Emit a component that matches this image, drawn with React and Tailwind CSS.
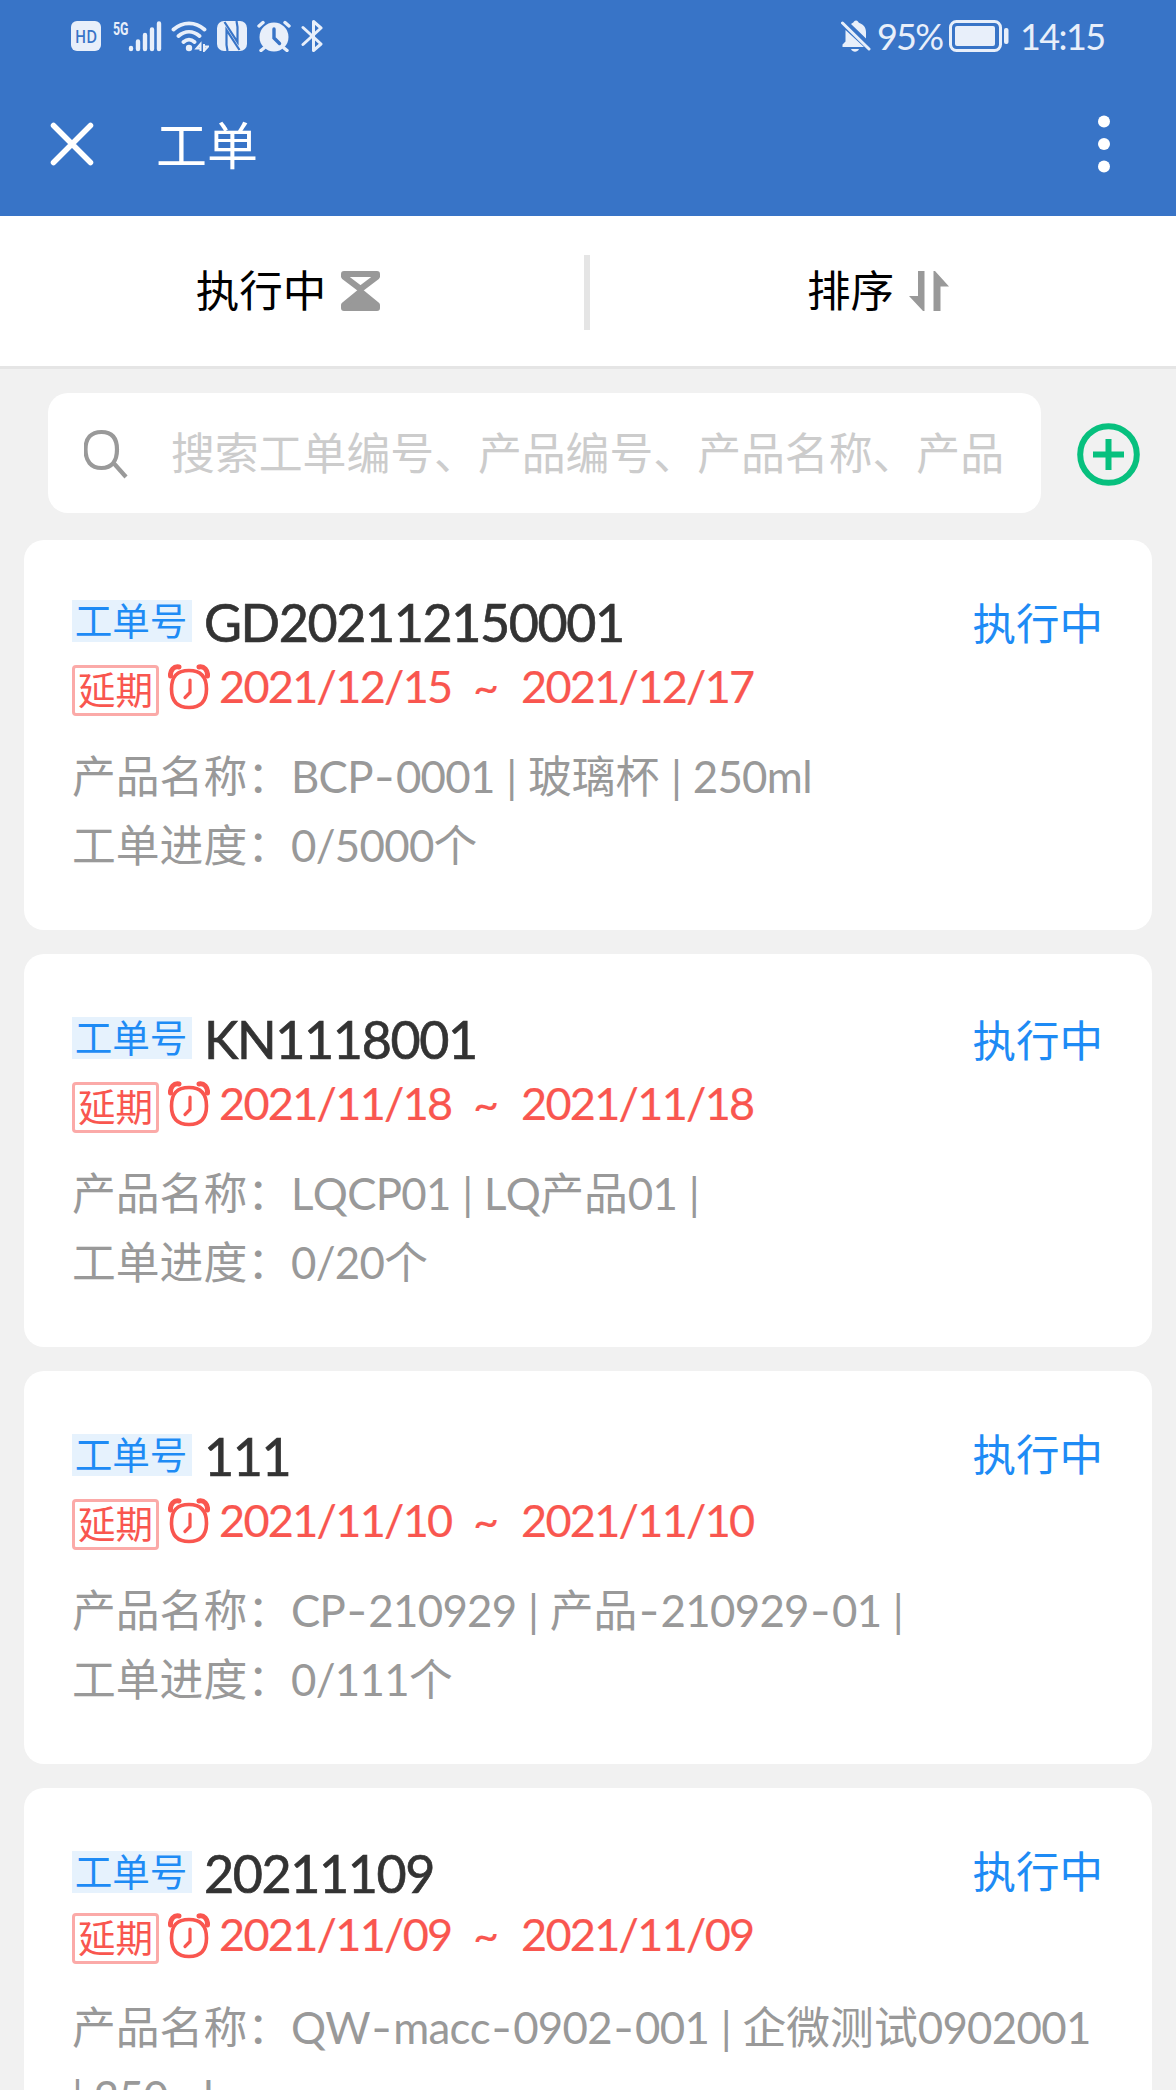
import React from 'react';
import clsx from 'clsx';

const ORDERS = [
  {
    code: 'GD202112150001',
    status: '执行中',
    start: '2021/12/15',
    end: '2021/12/17',
    product: 'BCP-0001 | 玻璃杯 | 250ml',
    progress: '0/5000个',
  },
  {
    code: 'KN1118001',
    status: '执行中',
    start: '2021/11/18',
    end: '2021/11/18',
    product: 'LQCP01 | LQ产品01 |',
    progress: '0/20个',
  },
  {
    code: '111',
    status: '执行中',
    start: '2021/11/10',
    end: '2021/11/10',
    product: 'CP-210929 | 产品-210929-01 |',
    progress: '0/111个',
  },
  {
    code: '20211109',
    status: '执行中',
    start: '2021/11/09',
    end: '2021/11/09',
    product: 'QW-macc-0902-001 | 企微测试0902001 | 250ml',
  },
];

// Latin runs use their own face next to the Chinese text, hyphens get a wider one
const Mixed = ({ text }) =>
  text.split(/([\u4e00-\u9fff：]+|-)/).filter(Boolean).map((part, i) => {
    if (part === '-') {
      return (
        <span key={i} className="mx-[1.5px] font-['Inter',sans-serif] leading-none">
          -
        </span>
      );
    }
    if (/[\u4e00-\u9fff：]/.test(part)) {
      return <span key={i}>{part}</span>;
    }
    return (
      <span key={i} className="font-['Lato',sans-serif] leading-none tracking-[-0.7px] [font-kerning:none] [word-spacing:1px]">
        {part}
      </span>
    );
  });

const StatusBar = () => (
  <div className="flex h-[72px] items-center pl-[71px] pr-[72px] text-[#e8effa]">
    <svg width="30" height="30" viewBox="0 0 30 30">
      <rect width="30" height="30" rx="6" fill="currentColor" />
      <text x="4" y="22" textLength="22" lengthAdjust="spacingAndGlyphs" fontSize="18.500" fontWeight="600" fontFamily="Open Sans, sans-serif" fill="#3874c7">
        HD
      </text>
    </svg>
    <svg className="ml-[12px]" width="49" height="38" viewBox="0 -3 49 38">
      <text x="0" y="14.500" textLength="15.500" lengthAdjust="spacingAndGlyphs" fontSize="19" fontWeight="700" fontFamily="Roboto, sans-serif" fill="currentColor">
        5G
      </text>
      <g stroke="currentColor" strokeWidth="4.400" strokeLinecap="round">
        <path d="M18 28v1M25 21.500v7.500M32 15v14M39 9.500v19.500M46 3.500v25.500" />
      </g>
    </svg>
    <svg className="ml-[9px]" width="38" height="32" viewBox="0 0 38 32" fill="none" stroke="currentColor" strokeWidth="3.800" strokeLinecap="round">
      <path d="M2.500 9.500C11.500 1.200 24.500 1.200 33.500 9.500M7.500 16c6.500-5.500 14.500-5.500 21 0M12.500 22c3.500-3 7.500-3 11 0" />
      <circle cx="18" cy="28" r="3.200" fill="currentColor" stroke="none" />
      <path d="M29.500 31v-7l-4 4.500h3M33 24v7l4-4.500h-3" strokeWidth="2" strokeLinecap="butt" />
    </svg>
    <svg className="ml-[8px]" width="30" height="30" viewBox="0 0 30 30">
      <rect width="30" height="30" rx="7" fill="currentColor" />
      <path d="M7.500 1L20.500 21V6L19.500 0M22.500 29L9.500 9V24L10.500 30" fill="none" stroke="#3874c7" strokeWidth="2.200" />
    </svg>
    <svg className="ml-[10px]" width="34" height="32" viewBox="0 0 34 32" fill="none" stroke="currentColor" strokeLinecap="round">
      <circle cx="17" cy="17" r="14.500" fill="currentColor" stroke="none" />
      <path d="M2 6l4-3.500M32 6l-4-3.500M7 28l-3 2.500M27 28l3 2.500" strokeWidth="3.400" />
      <path d="M17 9v9l5.500 5.500" stroke="#3874c7" strokeWidth="3.400" />
    </svg>
    <svg className="ml-[10px]" width="22" height="34" viewBox="0 0 22 34" fill="none" stroke="currentColor" strokeWidth="3" strokeLinejoin="round" strokeLinecap="round">
      <path d="M2 8.500l18 16.500-7.500 6.500v-29L20 9 2 25.500" />
    </svg>
    <div className="ml-auto flex items-center font-['Lato',sans-serif] text-[36px] leading-none">
      <svg width="30" height="32" viewBox="0 0 30 32" fill="currentColor">
        <path d="M4.500 10L23 27H1.500v-2.500l3-3zM10 4c1.500-1 2.500-1.300 3-2.500 1.200-1.300 3-1.300 4 0 .5 1 1 1.300 2 1.700 4 1.500 6 4.800 6 9.300v6z" />
        <path d="M10 29h8c-1.500 3.500-6.500 3.500-8 0z" />
        <path d="M1.500 3l26.500 26" stroke="currentColor" strokeWidth="3" strokeLinecap="round" />
      </svg>
      <span className="ml-[6px] w-[65px] tracking-[-1.800px]">95%</span>
      <svg className="ml-[7px]" width="60" height="32" viewBox="0 0 60 32" fill="none">
        <rect x="1.500" y="1.500" width="50" height="29" rx="6" stroke="currentColor" strokeWidth="3" />
        <rect x="6" y="6" width="40" height="20" rx="2" fill="currentColor" />
        <rect x="55" y="8" width="4.500" height="16" rx="2" fill="currentColor" />
      </svg>
      <span className="ml-[11px] w-[84px] tracking-[-1.600px]">14:15</span>
    </div>
  </div>
);

const NavBar = () => (
  <div className="flex h-36 items-center pl-[50px] pr-[66px] text-white">
    <svg width="44" height="44" viewBox="0 0 44 44" stroke="currentColor" strokeWidth="5.500" strokeLinecap="round">
      <path d="M3.500 3.500l37 37M40.500 3.500l-37 37" />
    </svg>
    <h1 className="mb-px ml-[62px] text-[51px] leading-none">工单</h1>
    <svg className="ml-auto" width="12" height="58" viewBox="0 0 12 58" fill="currentColor">
      <circle cx="6" cy="6.500" r="6" />
      <circle cx="6" cy="29" r="6" />
      <circle cx="6" cy="51.500" r="6" />
    </svg>
  </div>
);

const FilterBar = () => (
  <div className="flex h-[153px] items-center border-b-[3px] border-[#e5e5e5] bg-white text-[43.500px] leading-none text-black">
    <div className="flex flex-1 items-center justify-center pr-[8px]">
      <span className="mb-[5px]">执行中</span>
      <svg className="ml-[15px]" width="39" height="40" viewBox="0 0 39 40" fill="none" stroke="#999" strokeWidth="6" strokeLinejoin="round">
        <path d="M3 3h33v2.500L19.500 18 3 5.500z" />
        <path d="M3 37h33v-3L19.500 20.500 3 34z" fill="#999" />
      </svg>
    </div>
    <div className="mt-[2px] h-[75px] w-[6px] bg-[#e5e5e5]" />
    <div className="flex flex-1 items-center justify-center pr-[10px]">
      <span className="mb-[5px]">排序</span>
      <svg className="ml-[15px]" width="40" height="40" viewBox="0 0 40 40" fill="#999">
        <path d="M9 0h6.500v40H14L0 25h9z" />
        <path d="M24.500 0H26l14 15.500h-8.500V40h-7z" />
      </svg>
    </div>
  </div>
);

const SearchRow = () => (
  <div className="flex items-center pl-12 pr-9">
    <div className="flex h-[120px] w-[993px] items-center overflow-hidden rounded-[20px] bg-white pl-[36px]">
      <svg className="mt-px" width="46" height="50" viewBox="0 0 46 50" fill="none" stroke="#999" strokeWidth="4.200">
        <path d="M17.500 3c10.500 0 15.500 6.500 15.500 17.500S28 39 17.500 39 1.500 32 1.500 20.500 7 3 17.500 3z" />
        <path d="M30 34.500L42 48" />
      </svg>
      <span className="mb-[3px] ml-[41px] whitespace-nowrap text-[43.850px] leading-none text-[#ccc]">
        搜索工单编号、产品编号、产品名称、产品
      </span>
    </div>
    <svg className="ml-auto mt-[3px]" width="63" height="63" viewBox="0 0 63 63" fill="none" stroke="#07c07e" strokeWidth="6">
      <circle cx="31.500" cy="31.500" r="28.300" />
      <path d="M31.500 16v31M16 31.500h31" />
    </svg>
  </div>
);

const AlarmIcon = () => (
  <svg width="42" height="46" viewBox="0 0 42 46" fill="none" stroke="#f9564f" strokeWidth="3.600" strokeLinecap="round">
    <path d="M21 6.500c12 0 17.500 6 17.500 18.500S33 43.500 21 43.500 3.500 37.500 3.500 25 9 6.500 21 6.500z" />
    <path d="M22 16v12.500l-5 5" strokeWidth="3.200" />
    <path d="M2.500 12C2 6 6 2 11 3M39.500 12C40 6 36 2 31 3" strokeWidth="5" />
  </svg>
);

const OrderCard = ({ order, index }) => {
  const first = index === 0;
  const last = index === ORDERS.length - 1;

  return (
    <div className={clsx('rounded-[20px] bg-white px-12', first ? 'h-[390px] pt-12' : 'h-[393px] pt-[51px]')}>
      <div className="flex h-[70px] items-center">
        <span className="mb-[4px] flex h-[42px] w-[120px] items-center justify-center bg-[#e6f2fd] pb-[5px] pr-[2px] text-[37.600px] leading-none text-[#1e8bf5]">
          工单号
        </span>
        <span className="mb-[3px] ml-3 font-['Lato',sans-serif] text-[52px] leading-none tracking-[-1.400px] text-[#333] [-webkit-text-stroke:0.7px_#333]">
          {order.code}
        </span>
        <span className={clsx('ml-auto mr-px text-[43.500px] leading-none text-[#1e8bf5]', index < 2 ? 'mb-[2px]' : 'mb-[8px]')}>
          {order.status}
        </span>
      </div>
      <div className="flex h-[60px] items-center text-[#f9564f]">
        <span
          className={clsx(
            'flex h-[51px] w-[87px] items-center justify-center rounded-[4px] border-[3px] border-[#fbaaa8] pb-[6px] text-[37.600px] leading-none',
            last ? 'mb-px' : 'mt-[5px]'
          )}
        >
          延期
        </span>
        <span className={clsx('ml-[9px]', last ? 'mb-[6px]' : 'mb-[3px]')}>
          <AlarmIcon />
        </span>
        <span
          className={clsx(
            "ml-[9px] flex font-['Lato',sans-serif] text-[45px] leading-none tracking-[-1.700px] [-webkit-text-stroke:0.2px_#f9564f]",
            last ? 'mb-[9px]' : 'mb-[3px]'
          )}
        >
          <span className="w-[254px]">{order.start}</span>
          <span className="w-[48px]">~</span>
          <span>{order.end}</span>
        </span>
      </div>
      <div className="mt-[22px] text-[43.800px] leading-[69px] text-[#999]">
        <p>
          <Mixed text={`产品名称：${order.product}`} />
        </p>
        {order.progress && (
          <p>
            <Mixed text={`工单进度：${order.progress}`} />
          </p>
        )}
      </div>
    </div>
  );
};

export default function App() {
  return (
    <div className="h-[2090px] w-[1176px] overflow-hidden bg-[#f1f1f1] font-['Noto_Sans_CJK_SC',sans-serif]">
      <header className="bg-[#3874c7]">
        <StatusBar />
        <NavBar />
      </header>
      <FilterBar />
      <main className="pt-6">
        <SearchRow />
        <div className="mt-[27px] flex flex-col gap-6 px-6">
          {ORDERS.map((order, i) => (
            <OrderCard key={order.code} order={order} index={i} />
          ))}
        </div>
      </main>
    </div>
  );
}
